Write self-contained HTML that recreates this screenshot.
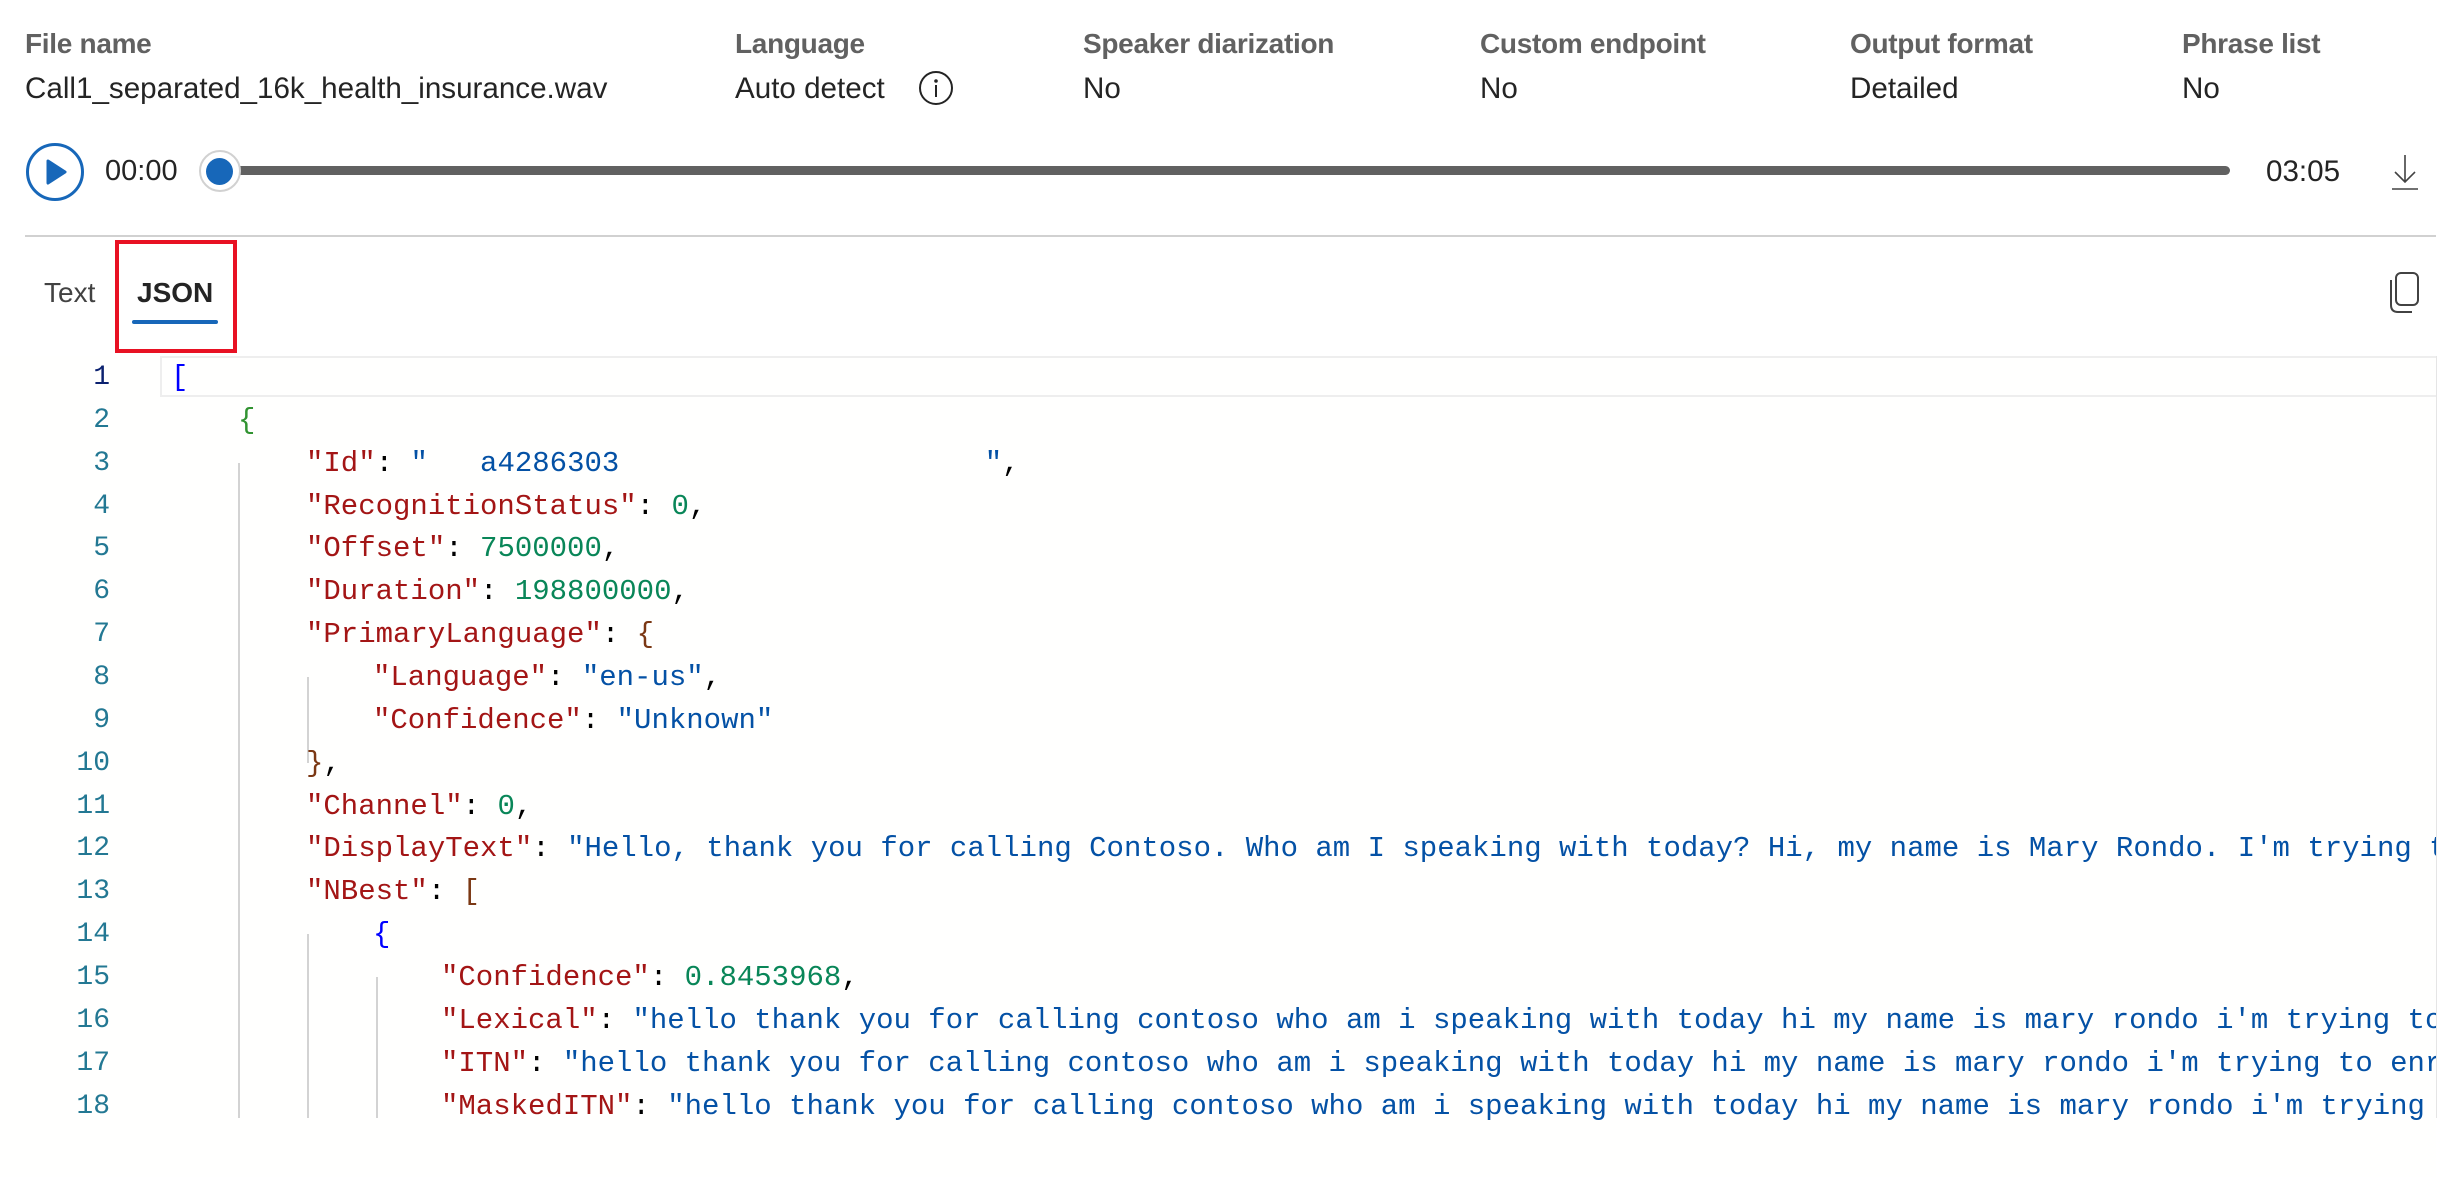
<!DOCTYPE html>
<html><head><meta charset="utf-8"><style>
*{margin:0;padding:0;box-sizing:border-box}
body{width:2461px;height:1177px;background:#fff;position:relative;overflow:hidden;font-family:"Liberation Sans",sans-serif}
.lab{position:absolute;top:28px;font-size:28px;color:#616161;font-weight:bold;letter-spacing:-0.3px}
.val{position:absolute;top:72px;font-size:29.6px;color:#242424}
.code{position:absolute;left:0;top:356px;width:2436px;height:821px;background:#fffffe;overflow:hidden;font-family:"Liberation Mono",monospace;font-size:29px}
.ln{position:absolute;left:0;width:110px;text-align:right;color:#237893;height:43px;line-height:43px;font-size:28px}
.cl{position:absolute;white-space:pre;height:43px;line-height:43px;color:#000}
.l0{left:171px}.l1{left:238px}.l2{left:306px}.l3{left:373px}.l4{left:441px}
.k{color:#a31515}.s{color:#0451a5}.n{color:#098658}
.g{position:absolute;width:2px;background:#d3d3d3}
</style></head><body>
<div class="lab" style="left:25px">File name</div>
<div class="val" style="left:25px">Call1_separated_16k_health_insurance.wav</div>
<div class="lab" style="left:735px">Language</div>
<div class="val" style="left:735px">Auto detect</div>
<svg style="position:absolute;left:918px;top:70px" width="36" height="36" viewBox="0 0 36 36"><circle cx="18" cy="18" r="16" fill="none" stroke="#242424" stroke-width="2"/><circle cx="18" cy="11" r="1.8" fill="#242424"/><rect x="17" y="15" width="2" height="12" fill="#242424"/></svg>
<div class="lab" style="left:1083px">Speaker diarization</div>
<div class="val" style="left:1083px">No</div>
<div class="lab" style="left:1480px">Custom endpoint</div>
<div class="val" style="left:1480px">No</div>
<div class="lab" style="left:1850px">Output format</div>
<div class="val" style="left:1850px">Detailed</div>
<div class="lab" style="left:2182px">Phrase list</div>
<div class="val" style="left:2182px">No</div>

<svg style="position:absolute;left:25px;top:142px" width="60" height="60" viewBox="0 0 60 60"><circle cx="30" cy="30" r="27.5" fill="none" stroke="#1767b9" stroke-width="3"/><path d="M23 19 L40 30 L23 41 Z" fill="#1767b9" stroke="#1767b9" stroke-width="3" stroke-linejoin="round"/></svg>
<div style="position:absolute;left:105px;top:155px;font-size:29px;color:#242424">00:00</div>
<div style="position:absolute;left:222px;top:166px;width:2008px;height:9px;border-radius:5px;background:#616161"></div>
<div style="position:absolute;left:199px;top:150px;width:42px;height:42px;border-radius:50%;background:#fff;border:2px solid #d1d1d1"></div>
<div style="position:absolute;left:206px;top:158px;width:27px;height:27px;border-radius:50%;background:#1767b9"></div>
<div style="position:absolute;left:2266px;top:155px;font-size:29.6px;color:#242424">03:05</div>
<svg style="position:absolute;left:2390px;top:152px" width="30" height="40" viewBox="0 0 30 40"><path d="M15 3 V30 M5 20 L15 30 L25 20 M2 37 H28" fill="none" stroke="#424242" stroke-width="1.6"/></svg>
<div style="position:absolute;left:25px;top:235px;width:2411px;height:2px;background:#d1d1d1"></div>

<div style="position:absolute;left:44px;top:277px;font-size:28px;color:#424242">Text</div>
<div style="position:absolute;left:137px;top:277px;font-size:28px;color:#242424;font-weight:bold">JSON</div>
<div style="position:absolute;left:132px;top:320px;width:86px;height:4px;border-radius:2px;background:#1767b9"></div>
<div style="position:absolute;left:115px;top:240px;width:122px;height:113px;border:4px solid #e81123"></div>
<svg style="position:absolute;left:2388px;top:270px" width="34" height="46" viewBox="0 0 34 46"><rect x="8" y="3" width="22" height="32" rx="5" fill="none" stroke="#424242" stroke-width="2"/><path d="M3 10 V35 Q3 42 10 42 H24" fill="none" stroke="#424242" stroke-width="2"/></svg>

<div class="code">
<div style="position:absolute;left:160px;top:0;width:2276px;height:41px;border:2px solid #eee;border-right:none"></div>
<div class="g" style="left:238px;top:107px;height:655px"></div>
<div class="g" style="left:307px;top:321px;height:86px"></div>
<div class="g" style="left:307px;top:578px;height:184px"></div>
<div class="g" style="left:376px;top:621px;height:141px"></div>
<div class="ln" style="top:0;color:#0b216f">1</div><div class="cl l0" style="top:0"><span style="color:#0000ff">[</span></div>
<div class="ln" style="top:43px">2</div><div class="cl l1" style="top:43px"><span style="color:#319331">{</span></div>
<div class="ln" style="top:86px">3</div><div class="cl l2" style="top:86px"><span class="k">"Id"</span>: <span class="s">"   a4286303                     "</span>,</div>
<div class="ln" style="top:129px">4</div><div class="cl l2" style="top:129px"><span class="k">"RecognitionStatus"</span>: <span class="n">0</span>,</div>
<div class="ln" style="top:171px">5</div><div class="cl l2" style="top:171px"><span class="k">"Offset"</span>: <span class="n">7500000</span>,</div>
<div class="ln" style="top:214px">6</div><div class="cl l2" style="top:214px"><span class="k">"Duration"</span>: <span class="n">198800000</span>,</div>
<div class="ln" style="top:257px">7</div><div class="cl l2" style="top:257px"><span class="k">"PrimaryLanguage"</span>: <span style="color:#7b3814">{</span></div>
<div class="ln" style="top:300px">8</div><div class="cl l3" style="top:300px"><span class="k">"Language"</span>: <span class="s">"en-us"</span>,</div>
<div class="ln" style="top:343px">9</div><div class="cl l3" style="top:343px"><span class="k">"Confidence"</span>: <span class="s">"Unknown"</span></div>
<div class="ln" style="top:386px">10</div><div class="cl l2" style="top:386px"><span style="color:#7b3814">}</span>,</div>
<div class="ln" style="top:429px">11</div><div class="cl l2" style="top:429px"><span class="k">"Channel"</span>: <span class="n">0</span>,</div>
<div class="ln" style="top:471px">12</div><div class="cl l2" style="top:471px"><span class="k">"DisplayText"</span>: <span class="s">"Hello, thank you for calling Contoso. Who am I speaking with today? Hi, my name is Mary Rondo. I'm trying to enroll</span></div>
<div class="ln" style="top:514px">13</div><div class="cl l2" style="top:514px"><span class="k">"NBest"</span>: <span style="color:#7b3814">[</span></div>
<div class="ln" style="top:557px">14</div><div class="cl l3" style="top:557px"><span style="color:#0000ff">{</span></div>
<div class="ln" style="top:600px">15</div><div class="cl l4" style="top:600px"><span class="k">"Confidence"</span>: <span class="n">0.8453968</span>,</div>
<div class="ln" style="top:643px">16</div><div class="cl l4" style="top:643px"><span class="k">"Lexical"</span>: <span class="s">"hello thank you for calling contoso who am i speaking with today hi my name is mary rondo i'm trying to enroll</span></div>
<div class="ln" style="top:686px">17</div><div class="cl l4" style="top:686px"><span class="k">"ITN"</span>: <span class="s">"hello thank you for calling contoso who am i speaking with today hi my name is mary rondo i'm trying to enroll</span></div>
<div class="ln" style="top:729px">18</div><div class="cl l4" style="top:729px"><span class="k">"MaskedITN"</span>: <span class="s">"hello thank you for calling contoso who am i speaking with today hi my name is mary rondo i'm trying to</span></div>
</div>
<div style="position:absolute;left:2436px;top:356px;width:25px;height:762px;background:#fff;border-left:1px solid #e5e5e5"></div>
</body></html>
